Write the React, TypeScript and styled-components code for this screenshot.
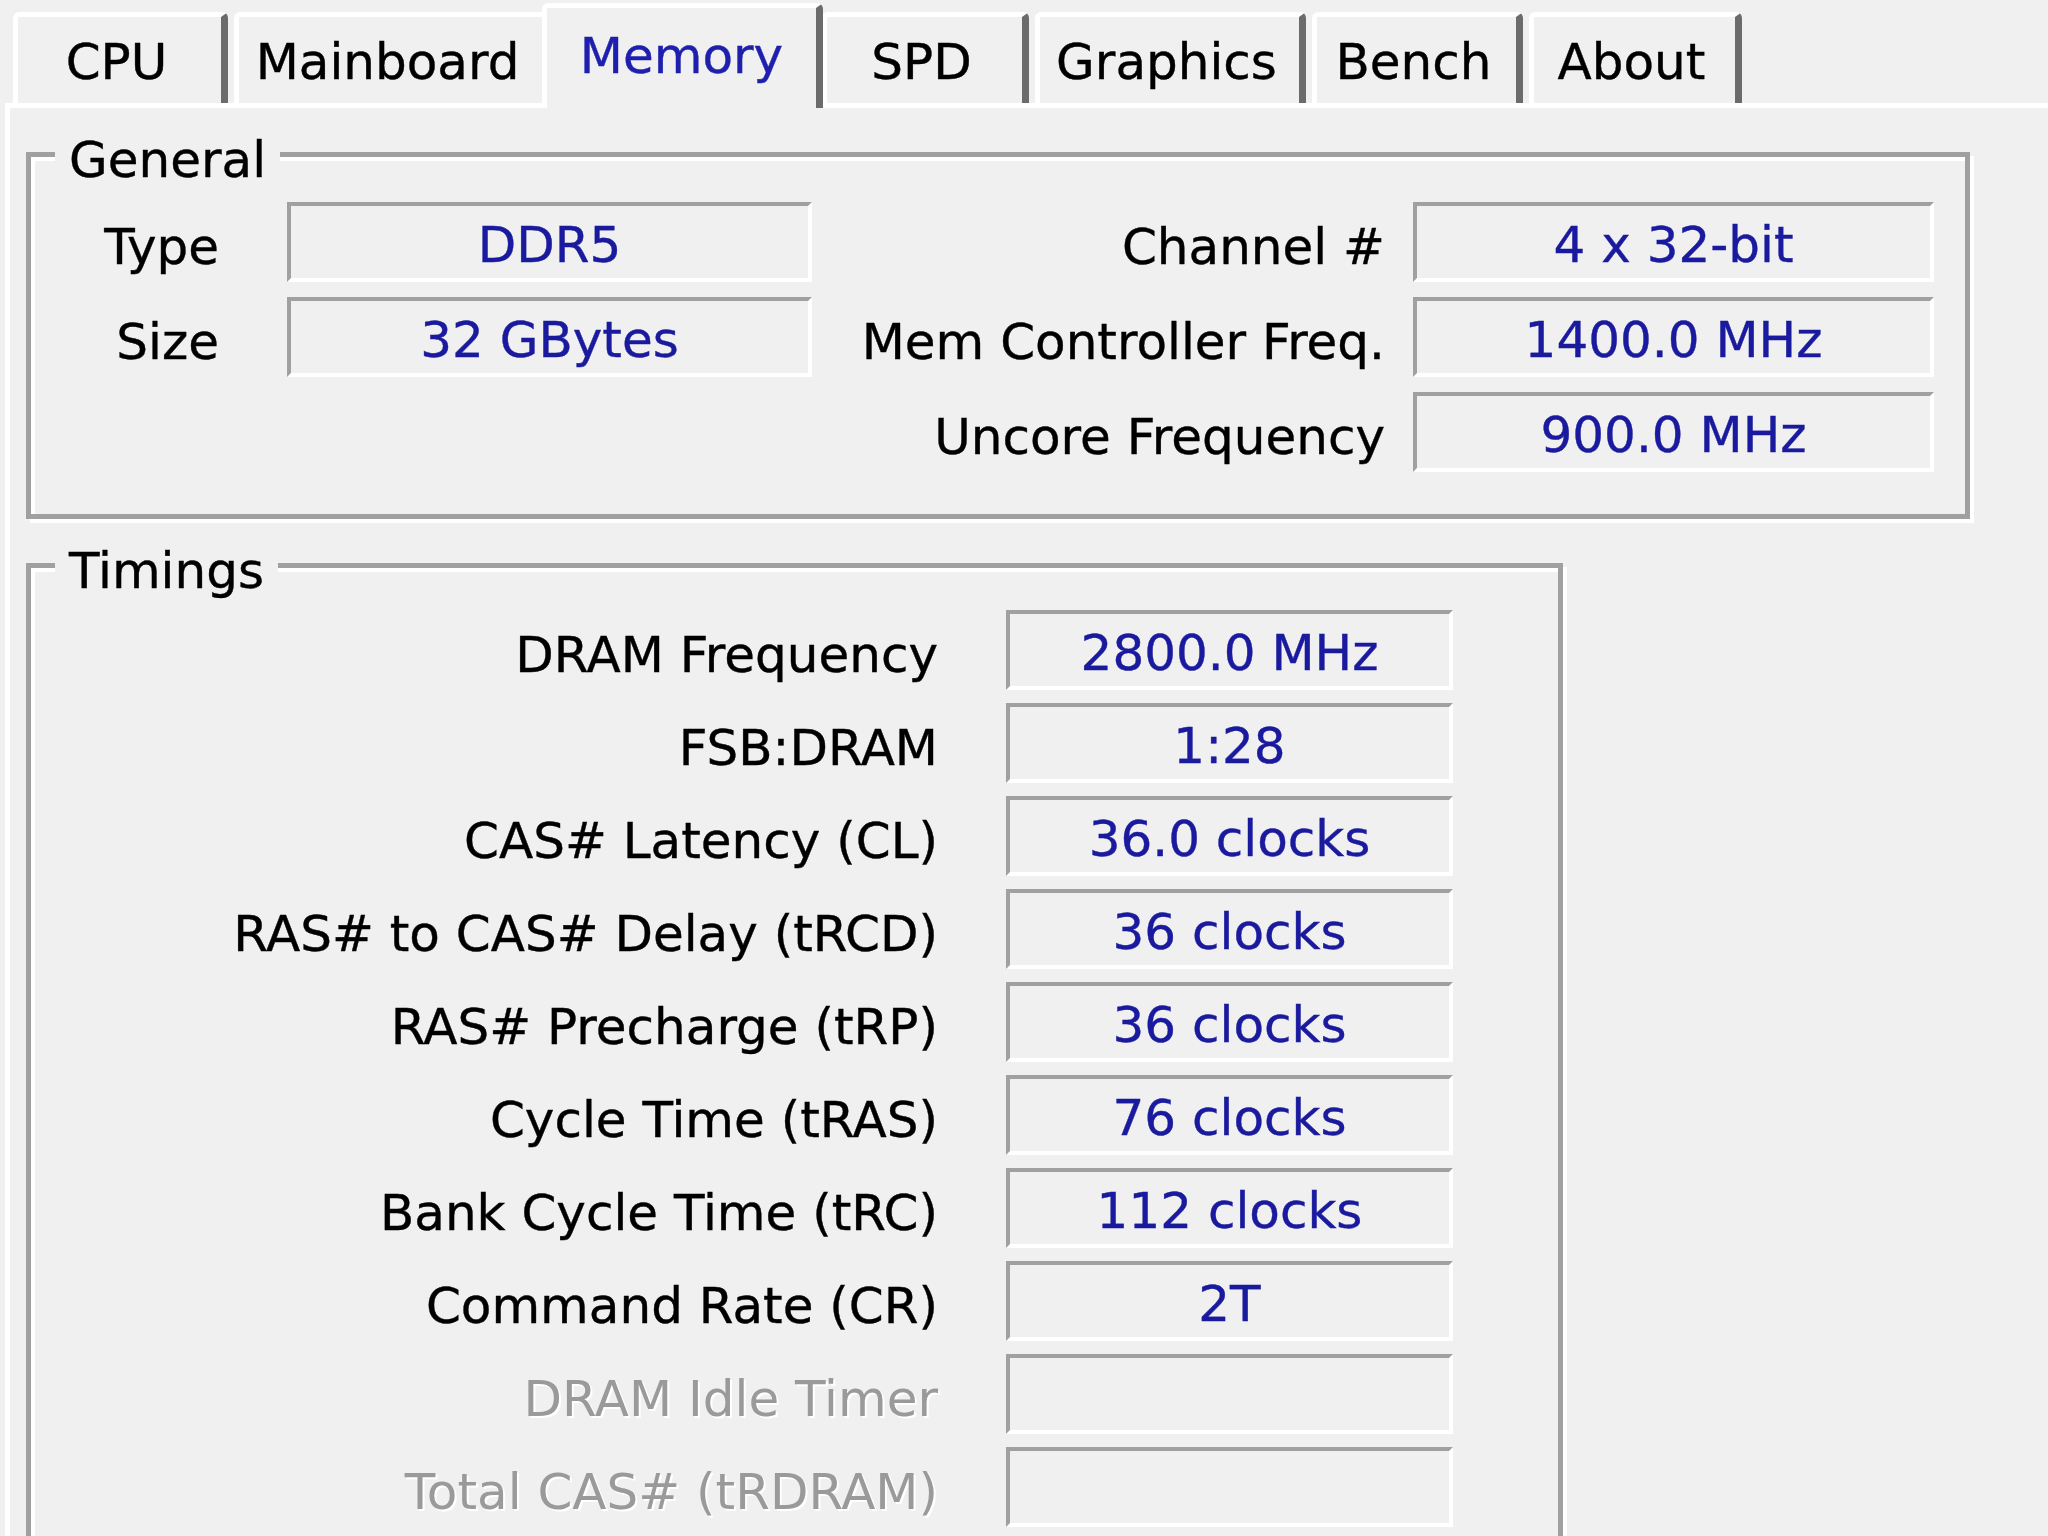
import React from 'react'
import styled, { createGlobalStyle } from 'styled-components'

const GlobalStyle = createGlobalStyle`
  html, body {
    margin: 0;
    padding: 0;
    overflow: hidden;
    background: #f0f0f0;
  }
  body {
    font-family: 'DejaVu Sans', 'Liberation Sans', sans-serif;
    font-size: 50px;
    color: #000;
  }
`

const Window = styled.div`
  width: 2048px;
  height: 1536px;
  overflow: hidden;
  background: #f0f0f0;
`

const TabStrip = styled.div`
  display: flex;
  align-items: flex-end;
  gap: 6px;
  height: 103px;
  padding-left: 13px;
  box-sizing: border-box;
`

const Tab = styled.div<{ $width: number; $active?: boolean }>`
  position: relative;
  z-index: ${p => (p.$active ? 2 : 1)};
  flex: none;
  box-sizing: border-box;
  width: ${p => p.$width}px;
  height: ${p => (p.$active ? 105 : 91)}px;
  margin: ${p => (p.$active ? '0 -7px -5px -13px' : '0')};
  padding: ${p => (p.$active ? '0 0 4px' : '4px 6px 0 0')};
  display: flex;
  align-items: center;
  justify-content: center;
  background: #f0f0f0;
  border-top: 5px solid #fff;
  border-left: 5px solid #fff;
  border-right: 7px solid #6b6b6b;
  border-radius: 6px 6px 0 0;
  color: ${p => (p.$active ? '#1f1fae' : '#000')};
  -webkit-text-stroke: 0.4px currentColor;
  white-space: nowrap;
`

const Panel = styled.div`
  margin-left: 5px;
  border-left: 5px solid #fff;
  border-top: 5px solid #fff;
  padding: 44px 0 0 16px;
  height: 1500px;
`

const GroupBox = styled.div<{ $width: number }>`
  position: relative;
  box-sizing: border-box;
  width: ${p => p.$width}px;
  border: 5px solid #a0a0a0;
  box-shadow: inset 4px 4px 0 #fff, 4px 4px 0 #fff;

  & + & {
    margin-top: 44px;
  }
`

const Legend = styled.span`
  position: absolute;
  top: -26px;
  left: 24px;
  padding: 0 14px;
  line-height: 58px;
  background: #f0f0f0;
  white-space: nowrap;
  -webkit-text-stroke: 0.4px currentColor;
`

const GeneralGrid = styled.div`
  display: grid;
  grid-template-columns: 256px 525px 1fr 521px;
  grid-auto-rows: 80px;
  row-gap: 15px;
  padding: 45px 31px 42px 0;
`

const TimingsGrid = styled.div`
  display: grid;
  grid-template-columns: 975px 447px;
  grid-auto-rows: 80px;
  row-gap: 13px;
  padding: 42px 0 60px 0;
`

const Spacer = styled.div`
  grid-column: span 2;
`

const Label = styled.div<{ $gap: number; $disabled?: boolean }>`
  display: flex;
  align-items: center;
  justify-content: flex-end;
  padding: 9px ${p => p.$gap}px 0 0;
  white-space: nowrap;
  color: ${p => (p.$disabled ? '#9a9a9a' : '#000')};
  text-shadow: ${p => (p.$disabled ? '2px 2px 0 #fff' : 'none')};
  -webkit-text-stroke: ${p => (p.$disabled ? '0' : '0.4px currentColor')};
`

const Value = styled.div`
  box-sizing: border-box;
  display: flex;
  align-items: center;
  justify-content: center;
  border-style: solid;
  border-width: 4px;
  border-color: #a0a0a0 #fff #fff #a0a0a0;
  padding-top: 5px;
  color: #1a1a9e;
  -webkit-text-stroke: 0.4px currentColor;
  white-space: nowrap;
`

const tabs = [
  { label: 'CPU', width: 215 },
  { label: 'Mainboard', width: 315 },
  { label: 'Memory', width: 281, active: true },
  { label: 'SPD', width: 207 },
  { label: 'Graphics', width: 271 },
  { label: 'Bench', width: 211 },
  { label: 'About', width: 213 },
]

const timings: { label: string; value: string; disabled?: boolean }[] = [
  { label: 'DRAM Frequency', value: '2800.0 MHz' },
  { label: 'FSB:DRAM', value: '1:28' },
  { label: 'CAS# Latency (CL)', value: '36.0 clocks' },
  { label: 'RAS# to CAS# Delay (tRCD)', value: '36 clocks' },
  { label: 'RAS# Precharge (tRP)', value: '36 clocks' },
  { label: 'Cycle Time (tRAS)', value: '76 clocks' },
  { label: 'Bank Cycle Time (tRC)', value: '112 clocks' },
  { label: 'Command Rate (CR)', value: '2T' },
  { label: 'DRAM Idle Timer', value: '', disabled: true },
  { label: 'Total CAS# (tRDRAM)', value: '', disabled: true },
]

export default function App() {
  return (
    <Window>
      <GlobalStyle />
      <TabStrip>
        {tabs.map(t => (
          <Tab key={t.label} $width={t.width} $active={t.active}>
            {t.label}
          </Tab>
        ))}
      </TabStrip>
      <Panel>
        <GroupBox $width={1944}>
          <Legend>General</Legend>
          <GeneralGrid>
            <Label $gap={68}>Type</Label>
            <Value>DDR5</Value>
            <Label $gap={28}>Channel #</Label>
            <Value>4 x 32-bit</Value>

            <Label $gap={68}>Size</Label>
            <Value>32 GBytes</Value>
            <Label $gap={28}>Mem Controller Freq.</Label>
            <Value>1400.0 MHz</Value>

            <Spacer />
            <Label $gap={28}>Uncore Frequency</Label>
            <Value>900.0 MHz</Value>
          </GeneralGrid>
        </GroupBox>

        <GroupBox $width={1537}>
          <Legend>Timings</Legend>
          <TimingsGrid>
            {timings.map(t => (
              <React.Fragment key={t.label}>
                <Label $gap={68} $disabled={t.disabled}>
                  {t.label}
                </Label>
                <Value>{t.value}</Value>
              </React.Fragment>
            ))}
          </TimingsGrid>
        </GroupBox>
      </Panel>
    </Window>
  )
}
